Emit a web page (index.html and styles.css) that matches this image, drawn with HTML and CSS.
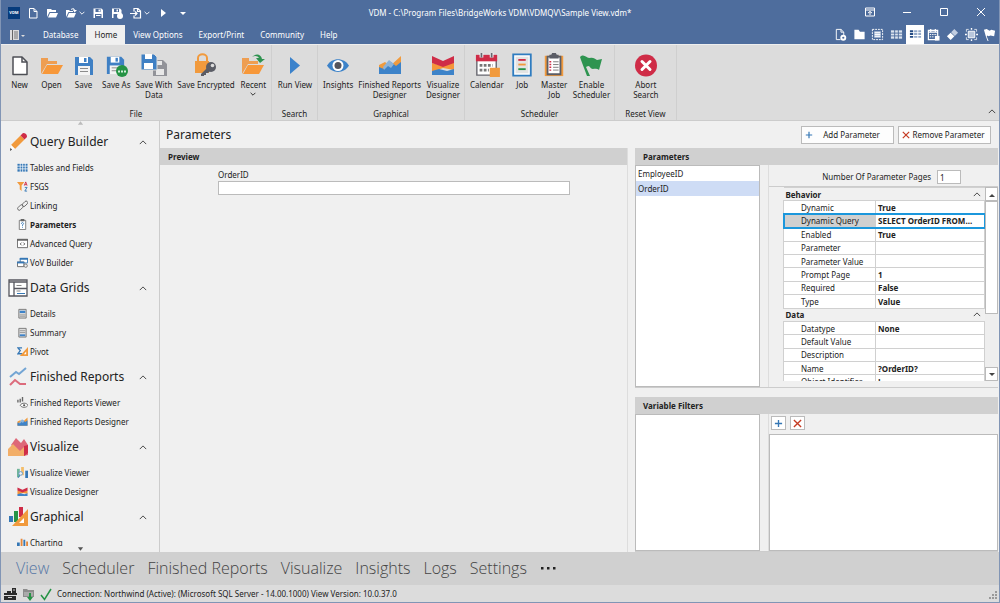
FILE: index.html
```html
<!DOCTYPE html>
<html lang="en">
<head>
  <meta charset="UTF-8">
  <title>VDM - Sample View</title>
  <link rel="stylesheet" href="styles.css">
</head>
<body>
  <!-- Shared icons -->
  <svg class="sprite" aria-hidden="true">
    <symbol id="i-page" viewBox="0 0 24 24"><path d="M5 4h9l5 5v12.500H5z" fill="#fff" stroke="#4d4f55" stroke-width="1.500" stroke-linejoin="round"/><path d="M14 4v5h5" fill="none" stroke="#4d4f55" stroke-width="1.500"/></symbol>
    <symbol id="i-open" viewBox="0 0 24 24"><path d="M1 21V5h7v3h9v3H7z" fill="#ee9e52"/><path d="M7 12h16l-5 9H2z" fill="#f7983a"/></symbol>
    <symbol id="i-save" viewBox="0 0 24 24"><path d="M3 4h15l3 3v15H3z" fill="#3f80c4"/><path d="M7 4h9v6H7z" fill="#fff"/><path d="M12 5h2.500v4H12z" fill="#3f80c4"/><path d="M6 13h12v9H6z" fill="#f4f4f4"/><path d="M8 15.500h8M8 18.500h8" stroke="#8c8c8c"/></symbol>
    <symbol id="i-recent" viewBox="0 0 24 24"><path d="M1 21V5h7v3h9v3H7z" fill="#ee9e52"/><path d="M7 12h16l-5 9H2z" fill="#f7983a"/><path d="M11 4c4-4 9-3 10 2h3l-5 4-4-5h3c-1-2-4-3-7-1z" fill="#2f9350"/></symbol>
    <symbol id="i-area" viewBox="0 0 24 24"><path d="M1 21V12l6-3 5 4L23 3v18z" fill="#f09b3e"/><path d="M1 21v-7l5 2 7-7 5 4 5-4v12z" fill="#3d83c9"/><path d="M5 14l6-7 5 4-3 4-3-2-4 4z" fill="#8db3d8"/></symbol>
    <symbol id="i-flow" viewBox="0 0 24 24"><path d="M1 10l11 3 11-4v8l-11-2-11 4z" fill="#f5953a"/><path d="M1 3l11 5 11-5v7l-11 4-11-4z" fill="#cf2c47"/><path d="M1 18l7-2 8 2 7-2v6H1z" fill="#3d83c9"/></symbol>
    <symbol id="i-up" viewBox="0 0 10 6"><path d="M1 5l4-4 4 4" fill="none" stroke="currentColor"/></symbol>
    <symbol id="i-down" viewBox="0 0 10 6"><path d="M1 1l4 4 4-4" fill="none" stroke="currentColor" stroke-width="1.500"/></symbol>
    <symbol id="i-plus" viewBox="0 0 10 10"><path d="M5 1v8M1 5h8" stroke="#3577b5" stroke-width="1.500"/></symbol>
    <symbol id="i-x" viewBox="0 0 10 10"><path d="M1 1l8 8M9 1L1 9" stroke="#c53a22" stroke-width="1.500"/></symbol>
  </svg>

  <div class="window">
    <header class="titlebar">
      <div class="quick">
        <span class="logo">VDM</span>
        <button class="tool" aria-label="New"><svg viewBox="0 0 12 12"><path d="M2.500 1.500h4.500l3 3v6.500H2.500zM7 1.500v3h3" fill="none" stroke="#fff"/></svg></button>
        <button class="tool" aria-label="Open"><svg viewBox="0 0 12 12"><path d="M1 10V2h4l1 1h4v2H3.500zM4 6h8l-2 4.500H2z" fill="#fff"/></svg></button>
        <button class="tool split" aria-label="Recent"><svg viewBox="0 0 12 12"><path d="M1 10V3h3l1 1h3v1H3.500zM4 6h7l-2 4.500H2zM6 2c2-1 3-1 4 1h2L9.500 5.500 8 3h1C8 2 7 2 6 3z" fill="#fff"/></svg><svg class="caret"><use href="#i-down"/></svg></button>
        <button class="tool" aria-label="Save"><svg viewBox="0 0 12 12"><path d="M1.500 1.500h8l1.500 1.500v8H1.500z" fill="#fff"/><path d="M3.500 2h5v3h-5zM3 7h6.500v4H3z" fill="#4e6d9d"/><path d="M6.500 2.500h1.500v2H6.500zM4 8h4.500v1H4z" fill="#fff"/></svg></button>
        <button class="tool" aria-label="Save As"><svg viewBox="0 0 12 12"><path d="M1 1.500h8l1.500 1.500v8H1z" fill="#fff"/><path d="M3 2h5v3H3zM2.500 7H9v4H2.500z" fill="#4e6d9d"/><path d="M5.500 2.500h1.500v2H5.500z" fill="#fff"/><circle cx="9" cy="9" r="3" fill="#fff"/></svg></button>
        <button class="tool split" aria-label="Import"><svg viewBox="0 0 12 12"><path d="M4 4.500v-3h4l2.500 2.500v7H4V8.500M7.500 1.500v3h3M0 6.500h7M5 4.500l2 2-2 2" fill="none" stroke="#fff" stroke-width="1.200"/></svg><svg class="caret"><use href="#i-down"/></svg></button>
        <button class="tool" aria-label="Run"><svg viewBox="0 0 12 12"><path d="M4 2l5 4-5 4z" fill="#fff"/></svg></button>
        <button class="tool" aria-label="Customize"><svg viewBox="0 0 12 12"><path d="M4 5h6L7 8z" fill="#fff"/></svg></button>
      </div>
      <h1 class="title">VDM - C:\Program Files\BridgeWorks VDM\VDMQV\Sample View.vdm*</h1>
      <div class="controls">
        <button aria-label="Ribbon options"><svg viewBox="0 0 10 10"><path d="M.5 1h9v8h-9zM.5 3h9M5 8V4.500M3 6l2-1.500L7 6" fill="none" stroke="#fff"/></svg></button>
        <button aria-label="Minimize"><svg viewBox="0 0 10 10"><path d="M1 5.500h8" stroke="#fff"/></svg></button>
        <button aria-label="Maximize"><svg viewBox="0 0 10 10"><path d="M1.500 1.500h7v7h-7z" fill="none" stroke="#fff"/></svg></button>
        <button aria-label="Close"><svg viewBox="0 0 10 10"><path d="M1 1l8 8M9 1L1 9" stroke="#fff"/></svg></button>
      </div>
    </header>

    <nav class="tabs">
      <button class="app-menu" aria-label="Application menu"><svg viewBox="0 0 16 12"><path d="M1 1h9v10H1z" fill="#ddd"/><path d="M3.500 1v10" stroke="#666"/><path d="M5 3h4M5 5h4M5 7h4M5 9h4" stroke="#777"/><path d="M12 6h4l-2 2z" fill="#ddd"/></svg></button>
      <button class="tab">Database</button>
      <button class="tab active">Home</button>
      <button class="tab">View Options</button>
      <button class="tab">Export/Print</button>
      <button class="tab">Community</button>
      <button class="tab">Help</button>
      <div class="view-tools">
        <button aria-label="New item"><svg viewBox="0 0 14 14"><path d="M2.500 1.500h5l3 3v3M7 12.500H2.500v-11M7.500 1.500v3h3" fill="none" stroke="#fff"/><circle cx="10" cy="10.500" r="2.200" fill="none" stroke="#fff" stroke-width="2"/></svg></button>
        <button aria-label="Folder"><svg viewBox="0 0 14 14"><path d="M1.500 12V2H6l1.500 2h5v8z" fill="#fff"/></svg></button>
        <button aria-label="Select"><svg viewBox="0 0 14 14"><path d="M1.500 1.500h11v11h-11z" fill="none" stroke="#fff" stroke-dasharray="2 1"/><path d="M3.500 3.500h7v7h-7z" fill="#b9c7dc"/><path d="M4 5h6M4 7h6M4 9h6" stroke="#fff"/></svg></button>
        <button aria-label="Grid"><svg viewBox="0 0 14 14"><path d="M1 2.500h12v9H1z" fill="#dbe3ee"/><path d="M1 5.500h12M1 8.500h12M5 2v10M9 2v10" stroke="#4e6d9d"/></svg></button>
        <button class="on" aria-label="Details"><svg viewBox="0 0 14 14"><path d="M1 3.500h3.500M1 6.500h3.500M1 9.500h3.500" stroke="#244b84" stroke-width="2"/><path d="M5.500 3.500H9M10 3.500h3M5.500 6.500H9M10 6.500h3M5.500 9.500H9M10 9.500h3" stroke="#91a8c9" stroke-width="2"/></svg></button>
        <button aria-label="Calendar"><svg viewBox="0 0 14 14"><path d="M1.500 2.500h10v10h-10zM1.500 4.500h10M4 1v3M9 1v3" fill="none" stroke="#fff" stroke-width="1.300"/><path d="M3 7h8M3 9.500h5" stroke="#fff" stroke-dasharray="1.500 1"/><path d="M8.500 8.500h5v5h-5z" fill="#fff"/></svg></button>
        <button aria-label="Erase"><svg viewBox="0 0 14 14"><path d="M1 9l4-4 4 4-4 4z" fill="#fff"/><path d="M5.500 4.500L9 1l4 4-3.500 3.500z" fill="#c1cde0"/></svg></button>
        <button aria-label="Target"><svg viewBox="0 0 14 14"><path d="M3.500 3.500h7v7h-7z" fill="#b9c7dc" stroke="#fff"/><path d="M7 0v2M7 12v2M0 7h2M12 7h2" stroke="#fff" stroke-width="1.500"/><path d="M1.500 4v-2.500H4M10 1.500h2.500V4M1.500 10v2.500H4M10 12.500h2.500V10" fill="none" stroke="#fff" stroke-width=".8"/></svg></button>
        <button aria-label="Flag"><svg viewBox="0 0 14 14"><path d="M1 2l3-1 3 2 2-1 4 1-1 6-4-1-2 1-1-1-1 1 2 5H5L3 9z" fill="#fff"/></svg></button>
      </div>
    </nav>

    <section class="ribbon">
      <div class="group">
        <div class="actions">
          <button class="action"><svg><use href="#i-page"/></svg>New</button>
          <button class="action"><svg><use href="#i-open"/></svg>Open</button>
          <button class="action"><svg><use href="#i-save"/></svg>Save</button>
          <button class="action"><svg viewBox="0 0 24 24"><use href="#i-save" width="23" height="23"/><circle cx="18" cy="18" r="6" fill="#259345"/><path d="M14 17.500h2v2h-2zM17 17.500h2v2h-2zM20 17.500h2v2h-2z" fill="#d5f0dc"/></svg>Save As</button>
          <button class="action"><svg class="wide" viewBox="0 0 28 24"><path d="M13 7h10l4 4v12H13z" fill="#929399"/><path d="M16 8h6v4h-6zM16 16h8v6h-8z" fill="#e8e8e8"/><path d="M1 1h13l3 3v13H1z" fill="#3f80c4" stroke="#dcdcdc"/><path d="M5 1h7v5H5zM4 10h9v6H4z" fill="#fff"/></svg>Save With<br>Data</button>
          <button class="action"><svg viewBox="0 0 24 24"><path d="M4 8V5c0-5 9-5 9 0v3" fill="none" stroke="#f19a3d" stroke-width="2"/><path d="M1 8h14v12H1z" fill="#f19a3d"/><circle cx="17" cy="14" r="5" fill="#5b5d66"/><circle cx="18.500" cy="12.500" r="1.800" fill="#ddd"/><path d="M13 15l3 3-2 2h-2v2h-2v1H7v-2z" fill="#5b5d66"/></svg>Save Encrypted</button>
          <button class="action"><svg><use href="#i-recent"/></svg>Recent<svg class="caret"><use href="#i-down"/></svg></button>
        </div>
        <h2 class="group-name">File</h2>
      </div>
      <div class="group">
        <div class="actions">
          <button class="action"><svg viewBox="0 0 24 24"><path d="M7 4l10 8.500L7 21z" fill="#3b82cb"/></svg>Run View</button>
        </div>
        <h2 class="group-name">Search</h2>
      </div>
      <div class="group">
        <div class="actions">
          <button class="action"><svg viewBox="0 0 24 24"><path d="M1 12.500C6 4 18 4 23 12.500 18 21 6 21 1 12.500z" fill="#3d83c9"/><circle cx="12" cy="12.500" r="5.500" fill="#fff"/><circle cx="12" cy="12.500" r="3.500" fill="#54545c"/></svg>Insights</button>
          <button class="action"><svg><use href="#i-area"/></svg>Finished Reports<br>Designer</button>
          <button class="action"><svg><use href="#i-flow"/></svg>Visualize<br>Designer</button>
        </div>
        <h2 class="group-name">Graphical</h2>
      </div>
      <div class="group">
        <div class="actions">
          <button class="action"><svg class="wide" viewBox="0 0 28 26"><path d="M3 4h21v20H3z" fill="#fff" stroke="#66666e" stroke-width="1.500"/><path d="M2 2h23v7H2z" fill="#cf2c47"/><path d="M8 0v5M19 0v5" stroke="#fff" stroke-width="4"/><path d="M8 0v5M19 0v5" stroke="#66666e" stroke-width="2"/><path d="M6 13.500h14M6 18.500h10" stroke="#777" stroke-width="3" stroke-dasharray="3 1.500"/><path d="M17 16h11v10H17z" fill="#f19a3d"/></svg>Calendar</button>
          <button class="action"><svg viewBox="0 0 24 26"><path d="M2.500 1.500h19v23h-19z" fill="#fff" stroke="#2f7cc0" stroke-width="2"/><path d="M5 4h14v18H5z" fill="#e3e3e3"/><path d="M8 7.500h8" stroke="#cf2c47" stroke-width="2"/><path d="M8 12.500h8" stroke="#f19a3d" stroke-width="2"/><path d="M8 17.500h8" stroke="#259345" stroke-width="2"/></svg>Job</button>
          <button class="action"><svg viewBox="0 0 24 26"><path d="M2 3h20v22H2z" fill="#f19a3d"/><path d="M5 4h14v19H5z" fill="#fff" stroke="#5b5d66" stroke-width="2"/><path d="M7 2h2l1-2h4l1 2h2v4H7z" fill="#5b5d66"/><path d="M11 9.500h6M11 12.500h6M11 15.500h6M11 18.500h6" stroke="#777"/><path d="M7 9.500h2M7 12.500h2M7 15.500h2M7 18.500h2" stroke="#cf2c47" stroke-width="1.500"/></svg>Master<br>Job</button>
          <button class="action"><svg viewBox="0 0 24 24"><path d="M1 4c4-4 6 1 10 1 3-1 5 1 7 2l5-1-3 11c-4-3-7 1-9-3-2-2-3 0-4 0l4 9H8L2 7z" fill="#2e9450"/></svg>Enable<br>Scheduler</button>
        </div>
        <h2 class="group-name">Scheduler</h2>
      </div>
      <div class="group">
        <div class="actions">
          <button class="action"><svg viewBox="0 0 24 24"><circle cx="12" cy="12.500" r="11" fill="#cf2c47"/><path d="M8 8.500l8 8M16 8.500l-8 8" stroke="#fff" stroke-width="3" stroke-linecap="round"/></svg>Abort<br>Search</button>
        </div>
        <h2 class="group-name">Reset View</h2>
      </div>
      <button class="collapse" aria-label="Collapse ribbon"><svg class="chevron"><use href="#i-up"/></svg></button>
    </section>

    <div class="body">
      <aside class="sidebar">
        <div class="scroll-hint"><svg viewBox="0 0 8 4"><path d="M1 4l3-4 3 4z" fill="#bbb"/></svg></div>
        <div class="sections">
          <button class="section"><svg viewBox="0 0 20 20"><path d="M3 13L12.500 3.500l4 4L7 17z" fill="#f19a3d"/><path d="M12.500 3.500L15 1q4 0 4 4l-2.500 2.500z" fill="#cf2c47"/><path d="M3 13l4 4-4 1z" fill="#fff"/><path d="M2.500 16l1.500 1.500L2 19z" fill="#333"/></svg>Query Builder<svg class="chevron"><use href="#i-up"/></svg></button>
          <a class="item" href="#"><svg viewBox="0 0 12 12"><path d="M.5 2h11v8.500H.5z" fill="#3577b5"/><path d="M0 4.500h12M0 7.500h12M3.500 1v10M6.200 1v10M9 1v10" stroke="#fff" stroke-width=".8"/></svg>Tables and Fields</a>
          <a class="item" href="#"><svg viewBox="0 0 12 12"><path d="M0 1h8L5 5v6L3 9V5z" fill="#f19a3d"/><path d="M8 5l1.500-4L11 5M8.500 4h2" fill="none" stroke="#cf2c47"/><path d="M8.500 7H11l-2.500 4H11" fill="none" stroke="#3577b5"/></svg>FSGS</a>
          <a class="item" href="#"><svg viewBox="0 0 12 12"><rect x="5" y="2.500" width="7" height="3.500" rx="1.700" transform="rotate(-45 8.500 4)" fill="none" stroke="#666"/><rect x="0" y="6.500" width="7" height="3.500" rx="1.700" transform="rotate(-45 3.500 8)" fill="none" stroke="#666"/></svg>Linking</a>
          <a class="item current" href="#"><svg viewBox="0 0 12 12"><path d="M2.500 1.500h7v10h-7z" fill="#fff" stroke="#777"/><path d="M4 0h4v2.500H4z" fill="#666"/><path d="M4.800 5.200c0-2 2.500-1.500 2.300 0L6 6.500v1M6 8.500v1" fill="none" stroke="#3577b5"/></svg>Parameters</a>
          <a class="item" href="#"><svg viewBox="0 0 12 12"><path d="M.5 1.500h11v9H.5z" fill="#fff" stroke="#666"/><path d="M0 2h12" stroke="#666" stroke-width="2"/><path d="M5 5L3.500 6.500 5 8M7 5l1.500 1.500L7 8" fill="none" stroke="#555"/></svg>Advanced Query</a>
          <a class="item" href="#"><svg viewBox="0 0 12 12"><path d="M3.500 1.500h8v5h-8z" fill="#fff" stroke="#3577b5"/><path d="M3 2h9" stroke="#3577b5" stroke-width="2"/><path d="M.5 5.500h7v5h-7z" fill="#fff" stroke="#666"/><path d="M0 6h8" stroke="#3577b5" stroke-width="2"/><circle cx="9.500" cy="9.500" r="1.800" fill="#eee" stroke="#777"/></svg>VoV Builder</a>

          <button class="section"><svg viewBox="0 0 20 20"><path d="M1 2h18v16H1zM1 4h18M6 4v14M6 10.500h13" fill="#fff" stroke="#55565e" stroke-width="1.300"/><path d="M8.500 7.500h5M8.500 13h4" stroke="#888"/><path d="M9 15.500h8" stroke="#3577b5"/></svg>Data Grids<svg class="chevron"><use href="#i-up"/></svg></button>
          <a class="item" href="#"><svg viewBox="0 0 12 12"><path d="M2 1.500h8v9.500H2z" fill="#ddd" stroke="#777"/><path d="M3 3h6v2.500H3z" fill="#3d83c9"/><path d="M3 7.500h6M3 9h6" stroke="#999"/></svg>Details</a>
          <a class="item" href="#"><svg viewBox="0 0 12 12"><path d="M2 1.500h8v9.500H2z" fill="#ddd" stroke="#777"/><path d="M3 4h6M3 6h6" stroke="#999"/><path d="M3 8h6v2H3z" fill="#3d83c9"/></svg>Summary</a>
          <a class="item" href="#"><svg viewBox="0 0 12 12"><path d="M5.500 2H1l2.500 3L1 8.500h4.500" fill="none" stroke="#3577b5" stroke-width="1.500"/><path d="M12 1v10H3z" fill="#f19a3d"/><path d="M10 6v3H7.500z" fill="#fff"/></svg>Pivot</a>

          <button class="section"><svg viewBox="0 0 20 20"><path d="M2 10l6-5 3 2 7-6" fill="none" stroke="#73a5d4" stroke-width="2"/><path d="M2 18l5-5 5 4h6" fill="none" stroke="#dc6b7c" stroke-width="2"/></svg>Finished Reports<svg class="chevron"><use href="#i-up"/></svg></button>
          <a class="item" href="#"><svg viewBox="0 0 12 12"><path d="M1 3v3M3.500 2v4M6 0v5" stroke="#666" stroke-width="1.500"/><path d="M3.500 9C5 6 10.500 6 12 9c-1.500 3-7 3-8.500 0z" fill="#fff" stroke="#666"/><circle cx="7.800" cy="9" r="1.200" fill="#555"/></svg>Finished Reports Viewer</a>
          <a class="item" href="#"><svg><use href="#i-area"/></svg>Finished Reports Designer</a>

          <button class="section"><svg viewBox="0 0 20 20"><path d="M3 8l5-7 5 5 3-4 4 6v10l-4 1z" fill="#de6878"/><path d="M16 9l4-1v8l-4 3z" fill="#cf2c47"/><path d="M0 12l5-5 7 7 4-4v9H0z" fill="#f2ae68"/></svg>Visualize<svg class="chevron"><use href="#i-up"/></svg></button>
          <a class="item" href="#"><svg viewBox="0 0 12 12"><path d="M0 2h3v9H0z" fill="#70b59a"/><path d="M4.500 0h3v9h-3z" fill="#f4bd68"/><path d="M9 4h3v8H9z" fill="#3577b5"/><circle cx="4" cy="7" r="2" fill="#eee" stroke="#6699c8"/><path d="M3 9l-2 3" stroke="#3577b5"/></svg>Visualize Viewer</a>
          <a class="item" href="#"><svg><use href="#i-flow"/></svg>Visualize Designer</a>

          <button class="section"><svg viewBox="0 0 20 20"><path d="M1 9h4v6H1z" fill="#3577b5"/><path d="M6 4h4v11H6z" fill="#259345"/><path d="M11 0h4v10h-4z" fill="#cf2c47"/><path d="M20 2v17H4z" fill="#f19a3d"/><path d="M16 11v5h-5z" fill="#fff"/></svg>Graphical<svg class="chevron"><use href="#i-up"/></svg></button>
          <a class="item" href="#"><svg viewBox="0 0 12 12"><path d="M0 6h3v6H0zM7 3h2v9H7z" fill="#3577b5"/><path d="M4 2h2v10H4zM10 5h2v7h-2z" fill="#e8873a"/></svg>Charting</a>
        </div>
        <div class="scroll-hint"><svg viewBox="0 0 8 4"><path d="M1 0l3 4 3-4z" fill="#555"/></svg></div>
      </aside>

      <main class="main">
        <div class="page-head">
          <h2>Parameters</h2>
          <button class="command"><svg><use href="#i-plus"/></svg><span>Add Parameter</span></button>
          <button class="command"><svg><use href="#i-x"/></svg><span>Remove Parameter</span></button>
        </div>

        <div class="panes">
          <section class="preview">
            <h3 class="pane-head">Preview</h3>
            <div class="field">
              <label for="order-id">OrderID</label>
              <input type="text" id="order-id">
            </div>
          </section>

          <div class="right">
            <section class="panel">
              <h3 class="pane-head">Parameters</h3>
              <div class="split-row">
                <ul class="list">
                  <li>EmployeeID</li>
                  <li class="selected">OrderID</li>
                </ul>
                <div class="props">
                  <div class="pages">
                    <label for="pages">Number Of Parameter Pages</label>
                    <input type="text" id="pages" value="1">
                  </div>
                  <div class="grid-wrap">
                    <div class="grid-view">
                      <table class="grid">
                        <colgroup><col><col class="value-col"></colgroup>
                        <tr class="cat"><th colspan="2">Behavior<svg class="chevron"><use href="#i-up"/></svg></th></tr>
                        <tr><td>Dynamic</td><td>True</td></tr>
                        <tr class="selected"><td>Dynamic Query</td><td>SELECT OrderID FROM...</td></tr>
                        <tr><td>Enabled</td><td>True</td></tr>
                        <tr><td>Parameter</td><td></td></tr>
                        <tr><td>Parameter Value</td><td></td></tr>
                        <tr><td>Prompt Page</td><td>1</td></tr>
                        <tr><td>Required</td><td>False</td></tr>
                        <tr><td>Type</td><td>Value</td></tr>
                        <tr class="cat"><th colspan="2">Data<svg class="chevron"><use href="#i-up"/></svg></th></tr>
                        <tr><td>Datatype</td><td>None</td></tr>
                        <tr><td>Default Value</td><td></td></tr>
                        <tr><td>Description</td><td></td></tr>
                        <tr><td>Name</td><td>?OrderID?</td></tr>
                        <tr><td>Object Identifier</td><td>L</td></tr>
                      </table>
                    </div>
                    <div class="scrollbar">
                      <button aria-label="Scroll up"><svg viewBox="0 0 6 4"><path d="M0 4l3-3 3 3z" fill="#444"/></svg></button>
                      <div class="thumb"></div>
                      <button aria-label="Scroll down"><svg viewBox="0 0 6 4"><path d="M0 0l3 3 3-3z" fill="#444"/></svg></button>
                    </div>
                  </div>
                </div>
              </div>
            </section>

            <section class="panel filters">
              <h3 class="pane-head">Variable Filters</h3>
              <div class="split-row">
                <ul class="list"></ul>
                <div class="props">
                  <div class="filter-tools">
                    <button aria-label="Add filter"><svg><use href="#i-plus"/></svg></button>
                    <button aria-label="Remove filter"><svg><use href="#i-x"/></svg></button>
                  </div>
                  <div class="filter-box"></div>
                </div>
              </div>
            </section>
          </div>
        </div>
      </main>
    </div>

    <nav class="bottom-nav">
      <a class="current" href="#">View</a>
      <a href="#">Scheduler</a>
      <a href="#">Finished Reports</a>
      <a href="#">Visualize</a>
      <a href="#">Insights</a>
      <a href="#">Logs</a>
      <a href="#">Settings</a>
      <button aria-label="More"><svg viewBox="0 0 16 4"><path d="M1 1h2.500v2.500H1zM7 1h2.500v2.500H7zM13 1h2.500v2.500H13z" fill="#222"/></svg></button>
    </nav>

    <footer class="status">
      <svg viewBox="0 0 14 14"><path d="M1 6h3V4h4v2h1V1h4v5h1v2H1zM1 9h12v4H1z" fill="#2b2b2b"/><path d="M10 3h2M5 10.500h4" stroke="#ccc"/></svg>
      <svg viewBox="0 0 14 14"><path d="M2 2h4l1 1h6v7H2z" fill="#8c8c8c"/><path d="M3 5h9v4H3z" fill="#aaa"/><path d="M9 6v5" stroke="#259345" stroke-width="2"/><path d="M6 10h6l-3 4z" fill="#259345"/></svg>
      <svg viewBox="0 0 14 14"><path d="M2 8l3.500 4.500L12 2" fill="none" stroke="#259345" stroke-width="1.500"/></svg>
      <span>Connection: Northwind (Active): (Microsoft SQL Server - 14.00.1000) View Version: 10.0.37.0</span>
      <svg class="grip" viewBox="0 0 9 9"><path d="M7 1h2M4 4h2M7 4h2M1 7h2M4 7h2M7 7h2" stroke="#999" stroke-width="2"/></svg>
    </footer>
  </div>
</body>
</html>
```
FILE: styles.css
```css
* {
  box-sizing: border-box;
}

body {
  margin: 0;
  font: 8px/10px "Noto Sans", sans-serif;
  color: #222;
}

h1, h2, h3, ul {
  margin: 0;
  padding: 0;
  font: inherit;
}

button, input {
  margin: 0;
  padding: 0;
  border: none;
  background: none;
  font: inherit;
  color: inherit;
}

a {
  color: inherit;
  text-decoration: none;
}

svg {
  flex: none;
}

.sprite {
  display: none;
}

.window {
  display: flex;
  flex-direction: column;
  height: 100vh;
  border: 1px solid #8195b5;
  border-top: none;
  background: #f0f0f0;
  overflow: hidden;
}

.chevron {
  width: 8px;
  height: 5px;
}

.caret {
  width: 6px;
  height: 4px;
}

/* Title bar */
.titlebar {
  display: grid;
  grid-template-columns: 1fr auto 1fr;
  align-items: center;
  height: 25px;
  background: #4e6d9d;
  color: #fff;
}

.quick {
  display: flex;
  align-items: center;
  gap: 7px;
  padding-left: 7px;
}

.logo {
  width: 12px;
  height: 12px;
  background: #063b7c;
  font-size: 4px;
  font-weight: bold;
  line-height: 12px;
  text-align: center;
}

.tool {
  display: flex;
  align-items: center;
  gap: 2px;
}

.tool svg:first-child {
  width: 12px;
  height: 12px;
}

.controls {
  display: flex;
  justify-content: flex-end;
}

.controls button {
  width: 37px;
  height: 24px;
}

.controls svg {
  width: 10px;
  height: 10px;
}

/* Ribbon tabs */
.tabs {
  display: flex;
  height: 19px;
  background: #4e6d9d;
  color: #fff;
}

.app-menu {
  width: 34px;
  padding-left: 8px;
  text-align: left;
}

.app-menu svg {
  width: 16px;
  height: 12px;
  vertical-align: middle;
}

.tab {
  padding: 0 8px;
}

.tab.active {
  background: #f0f0f0;
  color: #222;
}

.view-tools {
  display: flex;
  width: 168px;
  margin-left: auto;
}

.view-tools button {
  display: flex;
  flex: 1;
  align-items: center;
  justify-content: center;
}

.view-tools .on {
  background: #fff;
}

.view-tools svg {
  width: 13px;
  height: 13px;
}

/* Ribbon */
.ribbon {
  display: flex;
  height: 77px;
  background: #dcdcdc;
  border-top: 1px solid #eee;
  border-bottom: 1px solid #ccc;
}

.group {
  display: flex;
  flex-direction: column;
  justify-content: space-between;
  padding: 8px 2px 1px;
  border-right: 1px solid #cfcfcf;
}

.actions {
  display: flex;
  justify-content: center;
}

.action {
  display: flex;
  flex-direction: column;
  align-items: center;
  min-width: 32px;
  padding: 0 2px 0 3px;
  white-space: nowrap;
}

.action svg:first-child {
  width: 24px;
  height: 24px;
  margin-bottom: 3px;
}

.action svg.wide {
  width: 28px;
}

.action .caret {
  margin-top: 2px;
}

.group-name {
  padding: 0 8px;
  text-align: center;
}

.collapse {
  align-self: flex-end;
  margin-left: auto;
  padding: 4px 3px;
}

/* Sidebar */
.body {
  display: flex;
  flex: 1;
  min-height: 0;
}

.sidebar {
  display: flex;
  flex-direction: column;
  width: 159px;
  border-right: 1px solid #ccc;
}

.scroll-hint {
  height: 5px;
  flex: none;
}

.scroll-hint svg {
  display: block;
  width: 7px;
  height: 4px;
  margin: 0 auto;
}

.sections {
  flex: 1;
  margin-bottom: 1px;
  overflow: hidden;
}

.section {
  display: flex;
  align-items: center;
  gap: 2px;
  width: 100%;
  height: 32px;
  padding: 0 12px 0 7px;
  font-size: 12px;
  line-height: 16px;
}

.section svg:first-child {
  width: 20px;
  height: 20px;
}

.section .chevron {
  margin-left: auto;
}

.item {
  display: flex;
  align-items: center;
  gap: 2px;
  height: 19px;
  padding-left: 16px;
}

.item svg {
  width: 11px;
  height: 11px;
}

.item.current {
  font-weight: bold;
}

/* Main area */
.main {
  display: flex;
  flex: 1;
  flex-direction: column;
  min-width: 0;
}

.page-head {
  display: flex;
  align-items: center;
  gap: 4px;
  height: 27px;
  padding: 0 8px 0 6px;
}

.page-head h2 {
  margin-right: auto;
  font-size: 12px;
  line-height: 16px;
}

.command {
  display: flex;
  align-items: center;
  width: 93px;
  height: 18px;
  padding: 0 3px;
  border: 1px solid #bbb;
  background: #fdfdfd;
  white-space: nowrap;
}

.command svg {
  width: 8px;
  height: 8px;
}

.command span {
  flex: 1;
  text-align: center;
}

.panes {
  display: flex;
  flex: 1;
  gap: 7px;
  min-height: 0;
}

.pane-head {
  height: 17px;
  padding-left: 8px;
  background: #d0d0d0;
  font-weight: bold;
  line-height: 17px;
}

.preview {
  flex: 1;
  border-right: 1px solid #ddd;
}

.field {
  display: flex;
  flex-direction: column;
  gap: 1px;
  padding: 5px 57px 0 58px;
}

.field input {
  height: 14px;
  padding: 0 2px;
  border: 1px solid #bbb;
  background: #fff;
}

.right {
  display: flex;
  flex-direction: column;
  gap: 9px;
  width: 364px;
  padding-right: 1px;
}

.panel {
  display: flex;
  flex-direction: column;
  height: 240px;
  border-bottom: 1px solid #ccc;
}

.panel.filters {
  flex: 1;
  height: auto;
}

.split-row {
  display: flex;
  flex: 1;
  gap: 8px;
  min-height: 0;
}

.list {
  width: 125px;
  border: 1px solid #bbb;
  background: #fff;
  list-style: none;
}

.list li {
  height: 15px;
  padding-left: 2px;
  line-height: 15px;
}

.list .selected {
  background: #cedcf5;
}

.props {
  display: flex;
  flex: 1;
  flex-direction: column;
  border-left: 1px solid #ddd;
}

.pages {
  display: flex;
  align-items: center;
  justify-content: flex-end;
  gap: 6px;
  height: 22px;
  padding: 3px 37px 0 0;
  border-bottom: 1px solid #ccc;
}

.pages input {
  width: 24px;
  height: 14px;
  padding: 0 2px;
  border: 1px solid #bbb;
  background: #fff;
}

/* Property grid */
.grid-wrap {
  display: flex;
  height: 194px;
}

.grid-view {
  flex: 1;
  padding-left: 14px;
  overflow: hidden;
}

.grid {
  width: 100%;
  height: 202px;
  border-collapse: collapse;
  table-layout: fixed;
}

.grid td, .grid th {
  padding: 0 2px;
  border: 1px solid #d0d0d0;
  background: #fff;
  line-height: 9px;
  text-align: left;
  white-space: nowrap;
}

.grid td:first-child {
  padding-left: 17px;
}

.grid td:last-child {
  font-weight: bold;
}

.value-col {
  width: 109px;
}

.grid th {
  border-right: none;
  border-left: none;
  background: #f0f0f0;
}

.grid .chevron {
  float: right;
  margin: 2px 2px 0;
}

.grid .selected {
  outline: 2px solid #1b97dc;
  outline-offset: -1px;
}

.grid .selected td:first-child {
  background: #d0d0d0;
}

.scrollbar {
  display: flex;
  flex-direction: column;
  width: 13px;
  background: #eee;
}

.scrollbar button {
  height: 14px;
  border: 1px solid #bbb;
  background: #fff;
  line-height: 4px;
}

.scrollbar button:last-child {
  margin-top: auto;
}

.scrollbar svg {
  width: 6px;
  height: 4px;
}

.thumb {
  height: 113px;
  border: 1px solid #bbb;
  background: #fff;
}

.filter-tools {
  display: flex;
  gap: 4px;
  padding: 2px 2px 4px;
}

.filter-tools button {
  width: 15px;
  height: 14px;
  border: 1px solid #bbb;
  background: #fff;
}

.filter-tools svg {
  display: block;
  width: 9px;
  height: 9px;
  margin: auto;
}

.filter-box {
  flex: 1;
  border: 1px solid #bbb;
  background: #fff;
}

/* Bottom bars */
.bottom-nav {
  display: flex;
  align-items: center;
  gap: 13px;
  height: 33px;
  padding: 0 15px 2px;
  background: #d0d0d0;
  color: #444;
  font: 300 16px/22px "Open Sans", sans-serif;
}

.bottom-nav .current {
  color: #5576a5;
}

.bottom-nav svg {
  display: block;
  width: 16px;
  height: 4px;
}

.status {
  display: flex;
  align-items: center;
  gap: 4px;
  height: 17px;
  padding: 0 2px;
  background: #dcdcdc;
}

.status svg {
  width: 14px;
  height: 14px;
}

.status .grip {
  align-self: flex-end;
  width: 9px;
  height: 9px;
  margin: 0 0 2px auto;
}
```
